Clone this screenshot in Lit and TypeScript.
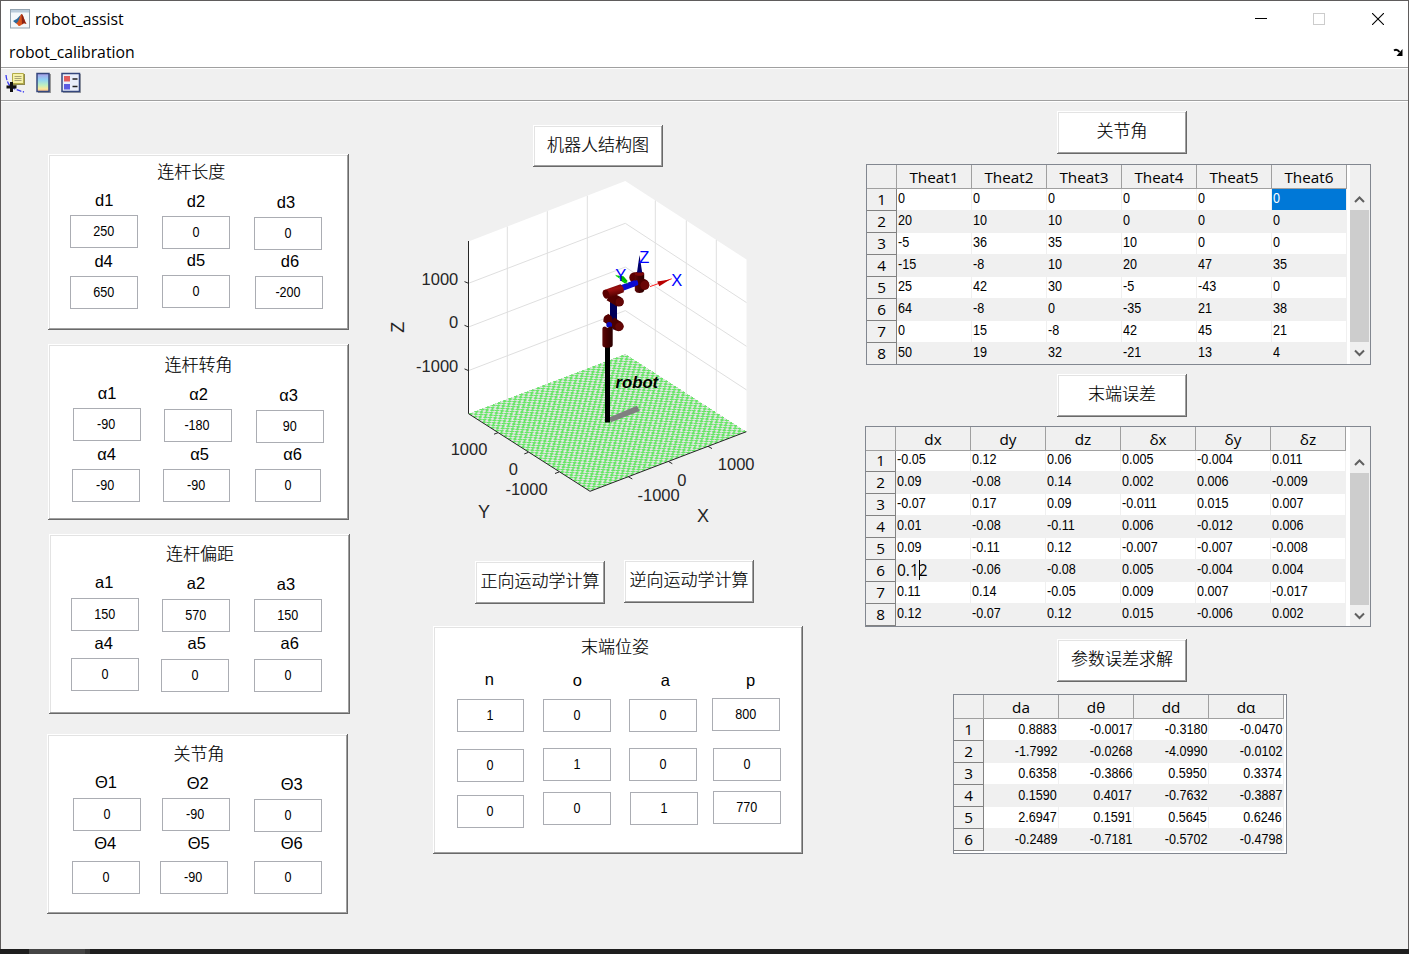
import { LitElement, html, svg, css, nothing } from "lit";
import { customElement, property } from "lit/decorators.js";

// [text, x inside the panel, drop inside the row, width]
type Item = [string, number, number, number?];
interface Row { kind: "title" | "label" | "box"; h: number; items: Item[]; }

const WIDTHS = { title: 120, label: 40, box: 68 };

@customElement("param-panel")
class ParamPanel extends LitElement {
  @property({ attribute: false }) rows: Row[] = [];

  static styles = css`
    :host {
      display: block;
      box-sizing: border-box;
      background: #fff;
      box-shadow: inset -1px -1px #696969, inset 1px 1px #fff, inset -2px -2px #a0a0a0, inset 2px 2px #e3e3e3;
      color: #000;
    }
    .row { display: flex; align-items: flex-start; }
    .title, .label, .box { box-sizing: border-box; flex: none; text-align: center; white-space: nowrap; }
    .title { font: 300 17px/22px "Noto Sans CJK SC", sans-serif; -webkit-text-stroke: 0.15px #000; }
    .label { font: 16.5px/20px "Liberation Sans", Arial, sans-serif; }
    .box {
      height: 33px;
      border: 1px solid #abadb3;
      padding-right: 1px;
      font: 14px/30px "Liberation Sans", Arial, sans-serif;
    }
    .num { display: inline-block; transform: scaleX(0.9); }
  `;

  render() {
    return this.rows.map((r) => {
      let right = 0;
      return html`<div class="row" style="height:${r.h}px">
        ${r.items.map(([text, x, drop, w]) => {
          const width = w ?? WIDTHS[r.kind];
          const gap = x - right;
          right = x + width;
          return html`<div class=${r.kind} style="margin:${drop}px 0 0 ${gap}px;width:${width}px">${
            r.kind === "box" ? html`<span class="num">${text}</span>` : text
          }</div>`;
        })}
      </div>`;
    });
  }
}

@customElement("data-grid")
class DataGrid extends LitElement {
  @property({ attribute: false }) heads: string[] = [];
  @property({ attribute: false }) rows: string[][] = [];
  @property() selected = "";
  @property() editing = "";
  @property({ type: Boolean }) scroll = false;
  @property({ type: Boolean, reflect: true }) numeric = false;

  static styles = css`
    :host {
      display: flex;
      box-sizing: border-box;
      border: 1px solid #828790;
      background: #fff;
      overflow: hidden;
      color: #000;
      font: 14px/18px "Liberation Sans", Arial, sans-serif;
    }
    .grid { flex: none; display: flex; flex-direction: column; }
    .line { display: flex; flex: none; height: 22px; }
    .head { height: 24px; background: #f0f0f0; position: relative; z-index: 1; }
    .corner, .no { box-sizing: border-box; flex: none; width: 30px; background: #f0f0f0; border-right: 1px solid #828282; }
    .corner, .th { border-bottom: 1px solid #a0a0a0; border-right: 1px solid #a0a0a0; }
    .no { border-bottom: 1px solid #828282; font: 15.3px/21px "Open Sans", "Noto Sans", sans-serif; text-align: center; }
    .th { box-sizing: border-box; flex: none; width: 75px; text-align: center; font: 15.3px/24px "Open Sans", "Noto Sans", sans-serif; }
    .td {
      box-sizing: border-box; flex: none; width: 75px; padding-left: 1px; white-space: nowrap;
      border-right: 1px solid #f0f0f0; border-bottom: 1px solid #f0f0f0;
    }
    .even { background: #f0f0f0; }
    .sel { background: #0078d7; color: #fff; }
    .num { display: inline-block; transform: scaleX(0.9); transform-origin: 0 50%; }
    :host([numeric]) .td { text-align: right; padding: 1px 1px 0 0; }
    :host([numeric]) .num { transform-origin: 100% 50%; }
    .edit { font: 15.5px/21px "Open Sans", "Noto Sans", sans-serif; }
    .caret { display: inline-block; width: 1px; height: 20px; margin-right: -1px; background: #000; vertical-align: top; }
    .bar { flex: none; width: 20px; margin-left: auto; background: #f0f0f0; display: flex; flex-direction: column; padding-top: 24px; }
    .bar svg { flex: none; width: 19px; height: 22px; }
    .up { margin-top: var(--bar-lift, -1px); }
    .thumb { flex: none; height: 132px; width: 19px; background: #cdcdcd; }
    .lift { margin-top: -1px; }
  `;

  render() {
    return html`
      <div class="grid">
        <div class="line head"><div class="corner"></div>${this.heads.map((h) => html`<div class="th">${h}</div>`)}</div>
        <div class=${this.editing ? "lift" : "body"}>
          ${this.rows.map((r, i) => html`<div class="line">
            <div class="no">${i + 1}</div>
            ${r.map((v, j) => {
              const key = `${i}-${j}`;
              const cls = `td ${i % 2 ? "even" : ""} ${key === this.selected ? "sel" : ""}`;
              return key === this.editing
                ? html`<div class="${cls} edit">0.1<span class="caret"></span>2</div>`
                : html`<div class=${cls}><span class="num">${v}</span></div>`;
            })}
          </div>`)}
        </div>
      </div>
      ${this.scroll ? html`<div class="bar">
        <svg class="up" viewBox="0 0 19 22"><path d="M5 14l4.5-4.5L14 14" fill="none" stroke="#606060" stroke-width="2"/></svg>
        <div class="thumb"></div>
        <svg viewBox="0 0 19 22"><path d="M5 8.500l4.5 4.5L14 8.500" fill="none" stroke="#606060" stroke-width="2"/></svg>
      </div>` : nothing}
    `;
  }
}

@customElement("robot-plot")
class RobotPlot extends LitElement {
  static styles = css`
    :host { display: block; }
    svg { display: block; }
    text { font-family: "Liberation Sans", Arial, sans-serif; }
    .tick { font-size: 16.5px; fill: #262626; }
    .axis { font-size: 18px; fill: #262626; }
    .frame { font-size: 16.5px; fill: #00f; }
    .mid { text-anchor: middle; }
    .end { text-anchor: end; }
    .name { font-size: 16.7px; font-weight: bold; font-style: italic; }
    .gridline { stroke: #dfdfdf; fill: none; }
    .edge { stroke: #262626; fill: none; }
  `;

  render() {
    const zs = [43.3, 87, 130.6];
    return html`<svg width="400" height="360" viewBox="381 170 400 360">
      <defs>
        <pattern id="tiles" width="2" height="2" patternUnits="userSpaceOnUse"
          patternTransform="matrix(2.8 -1.065 2.17 1.384 468.4 413.7)">
          <rect width="2" height="2" fill="#e6e6e6"/>
          <rect width="1.08" height="1.08" fill="#66e666"/><rect x="1" y="1" width="1" height="1" fill="#66e666"/>
        </pattern>
        <linearGradient id="post"><stop offset="0" stop-color="#5c0808"/><stop offset="0.4" stop-color="#480000"/><stop offset="1" stop-color="#2a0000"/></linearGradient>
        <linearGradient id="arm" x1="0" y1="0" x2="0.3" y2="1"><stop offset="0" stop-color="#600000"/><stop offset="0.45" stop-color="#9c1010"/><stop offset="1" stop-color="#4a0000"/></linearGradient>
      </defs>
      <path d="M468.5 241.5L625.3 181L746.5 259.5V431.7L625.3 354L468.5 413.7Z" fill="#fff"/>
      <g class="gridline">
        ${[507.3, 547.3, 587.3].map((x) => svg`<path d="M${x} ${241.5 - (x - 468.5) * 0.385}V${413.7 - (x - 468.5) * 0.38}"/>`)}
        ${[655.3, 686.3, 716.3].map((x) => svg`<path d="M${x} ${181 + (x - 625.3) * 0.647}V${354 + (x - 625.3) * 0.642}"/>`)}
        ${zs.map((z) => svg`<path d="M468.5 ${240 + z}L625.3 ${180 + z}L746.5 ${259.3 + z}"/>`)}
      </g>
      <path d="M468.4 413.7L625.3 354L746.4 431.7L590 491.3Z" fill="url(#tiles)" shape-rendering="crispEdges"/>
      <path class="edge" d="M468.5 241V413.7L590 491.3L746.4 431.7"/>
      <g class="edge">
        ${zs.map((z) => svg`<path d="M468.5 ${240 + z}l-4 -1.7"/>`)}
        <path d="M498 432.7l-4 1.5M528.3 452.4l-4 1.5M559 472l-4 1.5M628.3 476.7l4 2.3M668.3 461.4l4 2.3M708 446.3l4 2.3"/>
      </g>
      <path d="M609 417.500L637 405.700L639.800 411L611 422.300Z" fill="#808080"/>
      <rect x="605" y="346" width="5" height="76.5"/>
      <g stroke-linecap="butt" fill="none">
        <path d="M615 322v7.500" stroke="#000070" stroke-width="5"/>
        <path d="M605.500 317.500L613 322.500" stroke="#560000" stroke-width="9"/>
        <path d="M613.500 301V321.500" stroke="#00005a" stroke-width="7"/>
        <path d="M611.500 321.500L618.500 326.300" stroke="#4c0000" stroke-width="10"/>
        <path d="M609 296L618.500 301.500" stroke="#520000" stroke-width="9.600"/>
      </g>
      <circle cx="608" cy="319.300" r="4.500" fill="#560000"/>
      <circle cx="609.200" cy="324.800" r="2.900" fill="#0a0ac0"/>
      <circle cx="618.500" cy="326.300" r="5" fill="#4c0000"/><circle cx="619.400" cy="326.600" r="4.200" fill="#640606"/>
      <circle cx="618.800" cy="301.700" r="4.900" fill="#4c0000"/><circle cx="619.600" cy="301.900" r="4" fill="#640606"/>
      <path d="M602.4 328.5Q602.4 326.700 605 326.500L607.500 328L610 326.500Q612.700 326.700 612.7 328.500V345Q612.7 347.8 607.5 347.8T602.4 345Z" fill="url(#post)"/>
      <circle cx="634.500" cy="277.500" r="5.200" fill="#5c0000"/>
      <path d="M634 278L644 285.300" stroke="#560000" stroke-width="10"/>
      <path d="M621 288.400L637.500 282.300" stroke="#0a0ad2" stroke-width="6"/>
      <path d="M603.5 290.2L620.5 284.300Q624.3 287.5 623.8 292.200L608.5 298.200Q601.5 296 603.5 290.2Z" fill="url(#arm)"/>
      <ellipse cx="606" cy="294.2" rx="3.2" ry="4.5" fill="#5a0000" transform="rotate(-20 606 294.2)"/>
      <path d="M634.8 274Q634.8 271.5 639.5 271.5T644.2 274V291Q643 293 639.5 293T634.8 290.5Z" fill="url(#post)"/>
      <ellipse cx="639.5" cy="273.700" rx="4.7" ry="2" fill="#7c0808"/>
      <path d="M632.500 284.300L638 282.300" stroke="#0a0ad2" stroke-width="5"/>
      <circle cx="643.700" cy="284.500" r="5.400" fill="#4c0000"/><circle cx="644.900" cy="285.200" r="4.500" fill="#6a0606"/>
      <path d="M639.5 255L642.2 272.5H637Z" fill="#00006c"/>
      <path d="M650 286.6L671.7 278.8" stroke="#ff2020"/><path d="M670 279.5L657.2 281.5L659.3 286.2Z" fill="#b80000"/>
      <path d="M615.5 275.2L623.5 276.2L627.7 281L625 283.6L620.5 280.6L621 278.5Z" fill="#00b400"/>
      <path d="M615.7 275.4L627.5 283.6" stroke="#00e600"/>
      <text class="frame mid" x="676.7" y="285.6">X</text><text class="frame mid" x="644.2" y="262.8">Z</text><text class="frame mid" x="620.7" y="280.5">Y</text>
      <text class="name" x="615.5" y="388.3">robot</text>
      <text class="tick end" x="458.3" y="284.7">1000</text><text class="tick end" x="458.3" y="328">0</text><text class="tick end" x="458.3" y="371.6">-1000</text>
      <text class="tick mid" x="469" y="454.8">1000</text><text class="tick mid" x="513.4" y="474.8">0</text><text class="tick mid" x="526.5" y="494.8">-1000</text>
      <text class="tick mid" x="658.6" y="500.8">-1000</text><text class="tick mid" x="681.8" y="486">0</text><text class="tick mid" x="736.2" y="469.8">1000</text>
      <text class="axis mid" x="484" y="517.5">Y</text><text class="axis mid" x="703" y="521.5">X</text>
      <text class="axis mid" transform="translate(404 327.3) rotate(-90)">Z</text>
    </svg>`;
  }
}

const six = (p: string, title: Item, tH: number, l1: [number, number][], l1h: number, b1: Item[], b1h: number, l2: [number, number][], l2h: number, b2: Item[]): Row[] => [
  { kind: "title", h: tH, items: [title] },
  { kind: "label", h: l1h, items: l1.map(([x, d], i) => [p + (i + 1), x, d] as Item) },
  { kind: "box", h: b1h, items: b1 },
  { kind: "label", h: l2h, items: l2.map(([x, d], i) => [p + (i + 4), x, d] as Item) },
  { kind: "box", h: 36, items: b2 },
];

const LENGTHS = six("d", ["连杆长度", 83.3, 6], 36,
  [[36.3, 0], [128, 1], [218, 2]], 25, [["250", 22, 0], ["0", 114, 1], ["0", 206, 2]], 35,
  [[35.6, 1], [128, 0], [222, 1]], 25, [["650", 22, 1], ["0", 114, 0], ["-200", 207, 1]]);
const TWISTS = six("α", ["连杆转角", 90.5, 9], 39,
  [[39, 0], [130.7, 1], [220.7, 2]], 25, [["-90", 25, 0], ["-180", 116, 1], ["90", 208, 2]], 36,
  [[38.7, 0], [131.7, 0], [224.7, 0]], 25, [["-90", 24, 0], ["-90", 115, 0, 67], ["0", 207, 0, 66]]);
const OFFSETS = six("a", ["连杆偏距", 91, 8], 38,
  [[35.3, 0], [127, 1], [217, 2]], 26, [["150", 22, 0], ["570", 113, 1], ["150", 205, 1]], 35,
  [[34.7, 0], [127.7, 0], [220.7, 0]], 25, [["0", 22, 0], ["0", 112, 1], ["0", 205, 1]]);
const JOINTS = six("Θ", ["关节角", 92, 8], 38,
  [[39, 0], [130.7, 1], [224.7, 2]], 26, [["0", 26, 0], ["-90", 115, 0], ["0", 207, 1]], 35,
  [[38.3, 0], [131.7, 0], [224.7, 0]], 28, [["0", 25, 0], ["-90", 113, 0], ["0", 207, 0]]);
const POSE: Row[] = [
  { kind: "title", h: 43, items: [["末端位姿", 122, 9]] },
  { kind: "label", h: 29, items: [["n", 36.3, 0], ["o", 124.3, 1], ["a", 212.3, 1], ["p", 297.5, 1]] },
  { kind: "box", h: 50, items: [["1", 24, 1, 67], ["0", 110, 1], ["0", 196, 1], ["800", 279, 0]] },
  { kind: "box", h: 43, items: [["0", 24, 1, 67], ["1", 110, 0], ["0", 196, 0], ["0", 280, 0]] },
  { kind: "box", h: 40, items: [["0", 24, 4, 67], ["0", 110, 1], ["1", 197, 1], ["770", 280, 0]] },
];

const table = (s: string) => s.trim().split("\n").map((l) => l.trim().split(/\s+/));
const ANGLES = table(`
  0 0 0 0 0 0
  20 10 10 0 0 0
  -5 36 35 10 0 0
  -15 -8 10 20 47 35
  25 42 30 -5 -43 0
  64 -8 0 -35 21 38
  0 15 -8 42 45 21
  50 19 32 -21 13 4`);
const ERRORS = table(`
  -0.05 0.12 0.06 0.005 -0.004 0.011
  0.09 -0.08 0.14 0.002 0.006 -0.009
  -0.07 0.17 0.09 -0.011 0.015 0.007
  0.01 -0.08 -0.11 0.006 -0.012 0.006
  0.09 -0.11 0.12 -0.007 -0.007 -0.008
  0.12 -0.06 -0.08 0.005 -0.004 0.004
  0.11 0.14 -0.05 0.009 0.007 -0.017
  0.12 -0.07 0.12 0.015 -0.006 0.002`);
const SOLVED = table(`
  0.8883 -0.0017 -0.3180 -0.0470
  -1.7992 -0.0268 -4.0990 -0.0102
  0.6358 -0.3866 0.5950 0.3374
  0.1590 0.4017 -0.7632 -0.3887
  2.6947 0.1591 0.5645 0.6246
  -0.2489 -0.7181 -0.5702 -0.4798`);

@customElement("app-root")
class AppRoot extends LitElement {
  static styles = css`
    :host { display: flex; flex-direction: column; width: 1409px; height: 954px; overflow: hidden; background: #1e1e1e; }
    .window {
      box-sizing: border-box; height: 949px; flex: none; display: flex; flex-direction: column;
      border: 1px solid #5f5c5c; border-bottom: 0; background: #f0f0f0; color: #000;
      font: 15.8px/20px "Open Sans", "Noto Sans", sans-serif;
    }
    .titlebar { box-sizing: border-box; display: flex; align-items: center; height: 37px; background: #fff; padding: 0 0 2px 9px; }
    .caption { margin-left: 5px; }
    .controls { display: flex; margin-left: auto; gap: 46px; padding-right: 24px; }
    .close { margin-left: 1px; }
    .menubar { box-sizing: border-box; display: flex; align-items: center; justify-content: space-between; height: 29px; background: #fff; padding: 0 4px 2px 8px; }
    .dock { margin-top: 2px; }
    .toolbar {
      display: flex; align-items: center; box-sizing: border-box; height: 35px; flex: none; padding: 0 0 3px 4px;
      border-top: 1px solid #a0a0a0; border-bottom: 1px solid #fff;
      box-shadow: inset 0 1px #fff, inset 0 -1px #a0a0a0;
    }
    .toolbar .second { margin: 0 10px 0 9px; }
    .content { display: flex; flex: 1; min-height: 0; }
    .column { display: flex; flex-direction: column; align-items: flex-start; flex: none; }
    .left { width: 380px; padding-top: 52px; }
    .middle { width: 480px; padding-top: 23px; }
    .right { width: 547px; padding-top: 9px; }
    .btn {
      box-sizing: border-box; flex: none; width: 130px; height: 43px; border: 0; margin: 0; padding: 0 0 5px;
      background: #fff; color: #000; text-align: center; white-space: nowrap;
      font: 300 17px/34px "Noto Sans CJK SC", sans-serif; -webkit-text-stroke: 0.15px #000;
      box-shadow: inset -1px -1px #696969, inset 1px 1px #fff, inset -2px -2px #a0a0a0, inset 2px 2px #e3e3e3;
    }
    .p1 { width: 301px; height: 176px; margin-left: 47px; }
    .p2 { width: 301px; height: 176px; margin: 14px 0 0 47px; }
    .p3 { width: 301px; height: 180px; margin: 14px 0 0 48px; }
    .p4 { width: 301px; height: 180px; margin: 20px 0 0 46px; }
    .structure { height: 42px; margin-left: 152px; }
    .plot { margin-top: 3px; }
    .pair { display: flex; gap: 19px; height: 44px; margin: 30px 0 0 94px; }
    .forward { margin-top: 1px; }
    .pose { width: 370px; height: 228px; margin: 22px 0 0 52px; }
    .b1 { margin-left: 196px; }
    .b2 { margin: 9px 0 0 196px; }
    .b3 { margin: 12px 0 0 196px; }
    .t1 { width: 505px; height: 201px; margin: 10px 0 0 5px; --bar-lift: -1px; }
    .t2 { width: 506px; height: 201px; margin: 9px 0 0 4px; --bar-lift: 0px; }
    .t3 { width: 334px; height: 160px; margin: 12px 0 0 92px; }
    .desk { flex: 1; display: flex; padding-left: 29px; }
    .chip { width: 56px; background: #454545; border-right: 5px solid #343434; }
  `;

  render() {
    return html`
      <div class="window">
        <div class="titlebar">
          <svg width="20" height="20" viewBox="0 0 20 20">
            <rect x="0.5" y="0.5" width="19" height="18.5" fill="#f4f8fb" stroke="#93a3b0"/>
            <path d="M1 1h18v2.5H1z" fill="#b9cbdb"/>
            <path d="M3 12l4-2.2 4-4.3-2 7.8-3 1.2z" fill="#2c6a9c"/>
            <path d="M6 14.5c3-1 4-9 5.5-9.5 1.5 0 3 7 5 10-2-1-3-.8-4.5.4S9.500 17 8.500 17c-.5-1.500-1.500-2-2.500-2.500z" fill="#d9541e"/>
            <path d="M11.500 5c1.500 0 3 7 5 10-2-1-3-.8-4.500.4z" fill="#8e2415"/>
          </svg>
          <span class="caption">robot_assist</span>
          <div class="controls">
            <svg width="12" height="12" viewBox="0 0 12 12"><path d="M0 5.500h12" stroke="#000"/></svg>
            <svg width="12" height="12" viewBox="0 0 12 12"><rect x="0.5" y="0.5" width="11" height="11" fill="none" stroke="#ccc"/></svg>
            <svg class="close" width="12" height="12" viewBox="0 0 12 12"><path d="M0 0l12 12M12 0L0 12" stroke="#000" stroke-width="1.100"/></svg>
          </div>
        </div>
        <div class="menubar">
          <span>robot_calibration</span>
          <svg class="dock" width="11" height="9" viewBox="0 0 11 9"><path d="M1 2.500Q4 0.500 6.500 4" fill="none" stroke="#000" stroke-width="2"/><path d="M9.500 1v7H3.500z"/></svg>
        </div>
        <div class="toolbar">
          <svg width="22" height="22" viewBox="0 0 22 22">
            <path d="M1 3c.5 6 3 11 6 12.500s6 3 12 4.500" fill="none" stroke="#3c3cf0" stroke-width="1.300" stroke-dasharray="5 1.500"/>
            <path d="M8 2h12v11H12l-4 4z" fill="#8f8a4e"/><path d="M7.500 1.500h11v10h-11z" fill="#f6f2a8" stroke="#b3ab48"/>
            <path d="M9.500 4.500h7M9.500 6.500h7M9.500 8.500h7" stroke="#a8a276"/>
            <path d="M6.500 10v10M1.500 15h10" stroke="#111" stroke-width="3"/>
          </svg>
          <svg class="second" width="15" height="22" viewBox="0 0 15 22">
            <defs><linearGradient id="cb" x2="0" y2="1"><stop offset="0" stop-color="#a99be8"/><stop offset="0.35" stop-color="#8fd3f5"/><stop offset="0.65" stop-color="#bff0c0"/><stop offset="0.85" stop-color="#fbe99a"/><stop offset="1" stop-color="#f6b08a"/></linearGradient></defs>
            <rect x="2" y="2" width="13" height="19" fill="#999"/><rect x="1" y="1.500" width="12" height="18" fill="url(#cb)" stroke="#35477d" stroke-width="1.500"/>
          </svg>
          <svg width="22" height="22" viewBox="0 0 22 22">
            <rect x="2" y="2" width="18" height="19" fill="#a5a5a5"/><rect x="1" y="1.500" width="17.500" height="18" fill="#e9eefa" stroke="#35477d" stroke-width="1.500"/>
            <rect x="3" y="4" width="6" height="5.500" fill="#e25b5b"/><rect x="3" y="12" width="6" height="5.500" fill="#5b5be2"/>
            <path d="M11.500 7h5M11.500 14.500h5" stroke="#222" stroke-width="1.500"/>
          </svg>
        </div>
        <div class="content">
          <div class="column left">
            <param-panel class="p1" .rows=${LENGTHS}></param-panel>
            <param-panel class="p2" .rows=${TWISTS}></param-panel>
            <param-panel class="p3" .rows=${OFFSETS}></param-panel>
            <param-panel class="p4" .rows=${JOINTS}></param-panel>
          </div>
          <div class="column middle">
            <button class="btn structure">机器人结构图</button>
            <robot-plot class="plot"></robot-plot>
            <div class="pair"><button class="btn forward">正向运动学计算</button><button class="btn">逆向运动学计算</button></div>
            <param-panel class="pose" .rows=${POSE}></param-panel>
          </div>
          <div class="column right">
            <button class="btn b1">关节角</button>
            <data-grid class="t1" scroll selected="0-5" .heads=${["Theat1", "Theat2", "Theat3", "Theat4", "Theat5", "Theat6"]} .rows=${ANGLES}></data-grid>
            <button class="btn b2">末端误差</button>
            <data-grid class="t2" scroll editing="5-0" .heads=${["dx", "dy", "dz", "δx", "δy", "δz"]} .rows=${ERRORS}></data-grid>
            <button class="btn b3">参数误差求解</button>
            <data-grid class="t3" numeric .heads=${["da", "dθ", "dd", "dα"]} .rows=${SOLVED}></data-grid>
          </div>
        </div>
      </div>
      <div class="desk"><div class="chip"></div></div>
    `;
  }
}
